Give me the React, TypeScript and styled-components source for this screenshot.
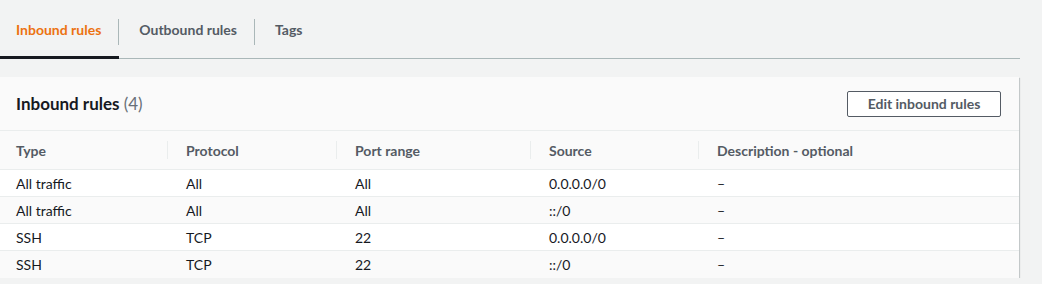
import React from "react";
import styled, { createGlobalStyle } from "styled-components";

const Global = createGlobalStyle`
  html, body { margin: 0; padding: 0; background: #f2f3f3; }
  body { font-family: Lato, "Open Sans", sans-serif; color: #16191f; -webkit-font-smoothing: antialiased; }
  * { box-sizing: border-box; }
`;

const Page = styled.div`
  width: 1020px;
  display: flex;
  flex-direction: column;
`;

const TabBar = styled.div`
  display: flex;
  height: 59px;
  border-bottom: 1px solid #aab7b8;
`;

const Tab = styled.div<{ $active?: boolean; $first?: boolean; $last?: boolean }>`
  position: relative;
  display: flex;
  align-items: center;
  padding: ${(p) => (p.$first ? "0 18px 0 16px" : "0 18px 0 20px")};
  font-size: 14px;
  font-weight: 700;
  color: ${(p) => (p.$active ? "#ec7211" : "#545b64")};
  border-bottom: 3px solid ${(p) => (p.$active ? "#16191f" : "transparent")};
  margin-bottom: -1px;
  padding-top: 2px;
  &::after {
    content: "";
    display: ${(p) => (p.$last ? "none" : "block")};
    position: absolute;
    right: 0;
    top: 19px;
    height: 26px;
    width: 1px;
    background: #aab7b8;
  }
`;

const Panel = styled.div`
  margin-top: 18px;
  width: 1019px;
  background: #ffffff;
  box-shadow: 0 1px 1px 0 rgba(0, 28, 36, 0.3), 1px 1px 1px 0 rgba(0, 28, 36, 0.15),
    -1px 1px 1px 0 rgba(0, 28, 36, 0.15);
`;

const Header = styled.div`
  display: flex;
  align-items: center;
  justify-content: space-between;
  height: 54px;
  padding: 0 18px 0 16px;
  background: #fafafa;
  border-bottom: 1px solid #eaeded;
`;

const Title = styled.h2`
  margin: 0;
  font-size: 17px;
  font-weight: 700;
  color: #16191f;
`;

const Count = styled.span`
  font-weight: 400;
  color: #687078;
`;

const Button = styled.button`
  width: 154px;
  height: 26px;
  padding: 0;
  background: #ffffff;
  border: 1px solid #545b64;
  border-radius: 2px;
  font-family: inherit;
  font-size: 14px;
  font-weight: 700;
  color: #545b64;
`;

const Row = styled.div<{ $head?: boolean; $alt?: boolean }>`
  display: grid;
  grid-template-columns: 167px 169px 194px 168px 1fr;
  height: ${(p) => (p.$head ? "39px" : "27px")};
  align-items: center;
  background: ${(p) => (p.$head || p.$alt ? "#fafafa" : "#ffffff")};
  border-bottom: 1px solid #eaeded;
  &:last-child { border-bottom: none; }
`;

const HeadCell = styled.div<{ $first?: boolean }>`
  height: 18px;
  display: flex;
  align-items: center;
  padding-left: ${(p) => (p.$first ? "16px" : "18px")};
  border-left: ${(p) => (p.$first ? "none" : "1px solid #eaeded")};
  font-size: 14px;
  font-weight: 700;
  color: #545b64;
`;

const Cell = styled.div<{ $first?: boolean }>`
  padding-left: ${(p) => (p.$first ? "16px" : "19px")};
  font-size: 14px;
  color: #16191f;
`;

const columns = ["Type", "Protocol", "Port range", "Source", "Description - optional"];
const rows = [
  ["All traffic", "All", "All", "0.0.0.0/0", "–"],
  ["All traffic", "All", "All", "::/0", "–"],
  ["SSH", "TCP", "22", "0.0.0.0/0", "–"],
  ["SSH", "TCP", "22", "::/0", "–"],
];

export default function App() {
  return (
    <Page>
      <Global />
      <TabBar>
        <Tab $active $first>Inbound rules</Tab>
        <Tab>Outbound rules</Tab>
        <Tab $last>Tags</Tab>
      </TabBar>
      <Panel>
        <Header>
          <Title>
            Inbound rules <Count>(4)</Count>
          </Title>
          <Button>Edit inbound rules</Button>
        </Header>
        <Row $head>
          {columns.map((c, i) => (
            <HeadCell key={c} $first={i === 0}>{c}</HeadCell>
          ))}
        </Row>
        {rows.map((r, ri) => (
          <Row key={ri} $alt={ri % 2 === 1}>
            {r.map((c, i) => (
              <Cell key={i} $first={i === 0}>{c}</Cell>
            ))}
          </Row>
        ))}
      </Panel>
    </Page>
  );
}
